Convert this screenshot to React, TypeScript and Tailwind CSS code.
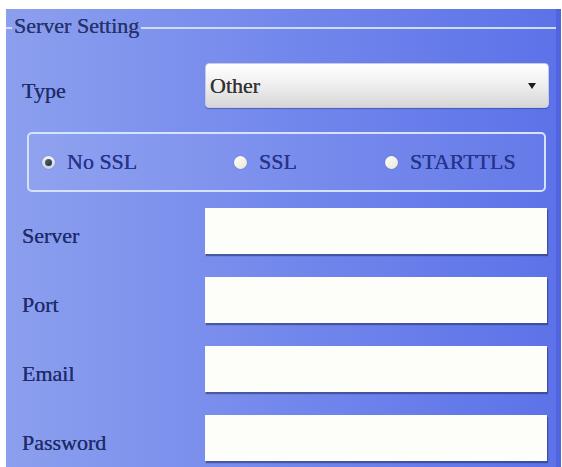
import React, { useState } from 'react';

const Radio = ({ checked }: { checked: boolean }) =>
  checked ? (
    <span className="flex h-[13px] w-[13px] items-center justify-center rounded-full bg-gradient-to-b from-[#f4f6fa] to-[#c9d0dc] shadow-[0_0_1px_rgba(40,50,90,0.6)]">
      <span className="h-[7px] w-[7px] rounded-full bg-gradient-to-br from-[#5a6a78] to-[#1f2c38]" />
    </span>
  ) : (
    <span className="h-[13px] w-[13px] rounded-full bg-gradient-to-br from-[#ffffff] to-[#e8e6d2] shadow-[0_0_1px_rgba(40,50,90,0.5)]" />
  );

const Field = ({ label }: { label: string }) => (
  <div className="flex items-center pl-[16px]">
    <span className="w-[183px] pt-[10px] text-[22px] leading-[24px] text-[#1f2c6a] [text-shadow:0_0_0.6px_#1f2c6a]">{label}</span>
    <input className="h-[46px] w-[342px] bg-[#fdfdf9] shadow-[1px_2px_1px_rgba(35,45,100,0.55)] outline-none" />
  </div>
);

const App = () => {
  const [ssl, setSsl] = useState<string>('none');
  const opts = [
    { id: 'none', text: 'No SSL', w: 'w-[192px]' },
    { id: 'ssl', text: 'SSL', w: 'w-[151px]' },
    { id: 'tls', text: 'STARTTLS', w: '' },
  ];

  return (
    <div className="h-[467px] overflow-hidden bg-white pl-[6px] pr-[1px] pt-[9px] font-['Liberation_Serif','Times_New_Roman',serif]">
      <div className="h-[458px] border-r-[5px] border-[#5064df] bg-gradient-to-r from-[#8c9fee] via-[#7388ec] to-[#5d72e8]">
        {/* legend */}
        <div className="flex h-[38px] items-center">
          <div className="h-[2px] w-[6px] bg-[#cfdcf8]" />
          <span className="-translate-y-[2px] px-[2px] text-[22px] leading-[22px] text-[#26336c] [text-shadow:0_0_0.6px_#26336c]">Server Setting</span>
          <div className="h-[2px] flex-1 bg-[#cfdcf8]" />
        </div>

        {/* type */}
        <div className="mt-[16px] flex items-center pl-[16px]">
          <span className="w-[183px] pt-[10px] text-[22px] leading-[24px] text-[#1f2c6a] [text-shadow:0_0_0.6px_#1f2c6a]">Type</span>
          <div className="flex h-[45px] w-[344px] items-center justify-between rounded-[4px] border border-[#c4cce8] bg-gradient-to-b from-[#ffffff] via-[#eeeeee] to-[#d6d6d6] pl-[4px] pr-[12px] shadow-[0_1px_1px_rgba(30,40,90,0.4)]">
            <span className="text-[22px] text-[#333333] [text-shadow:0_0_0.6px_#333333]">Other</span>
            <svg width="8" height="6" viewBox="0 0 8 6">
              <path d="M0 0 L8 0 L4 6 Z" fill="#1a1a1a" />
            </svg>
          </div>
        </div>

        {/* ssl choice */}
        <div className="ml-[21px] mt-[24px] flex h-[60px] w-[519px] items-center rounded-[5px] border-2 border-[#d4e2fc] bg-white/5 pl-[13px]">
          {opts.map((o) => (
            <label key={o.id} className={`flex cursor-pointer items-center gap-[12px] ${o.w}`} onClick={() => setSsl(o.id)}>
              <Radio checked={ssl === o.id} />
              <span className="text-[22px] leading-[24px] text-[#26348a] [text-shadow:0_0_0.6px_#26348a]">{o.text}</span>
            </label>
          ))}
        </div>

        <div className="mt-[16px] flex flex-col gap-[23px]">
          <Field label="Server" />
          <Field label="Port" />
          <Field label="Email" />
          <Field label="Password" />
        </div>
      </div>
    </div>
  );
};

export default App;
